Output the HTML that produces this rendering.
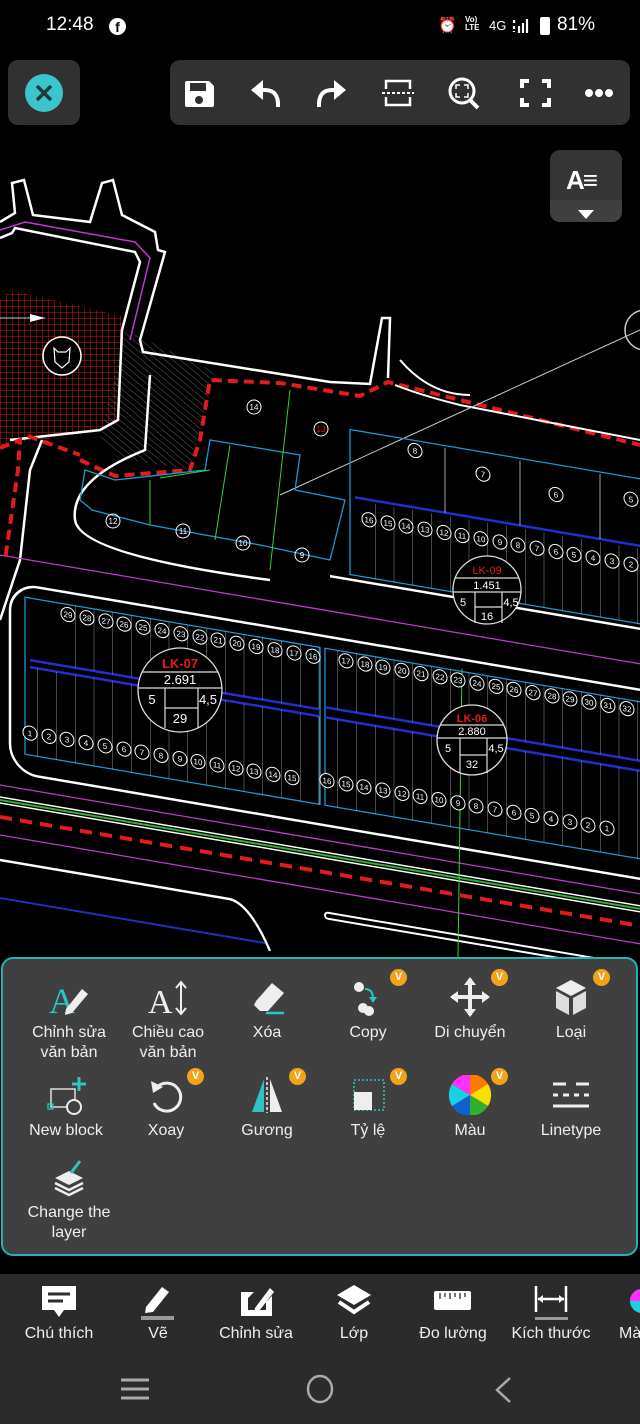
<!DOCTYPE html>
<html><head><meta charset="utf-8"><style>
*{margin:0;padding:0;box-sizing:border-box}
body{width:640px;height:1424px;background:#000;position:relative;overflow:hidden;font-family:"Liberation Sans","Noto Sans CJK SC",sans-serif;color:#fff}
.abs{position:absolute}
.sb{top:14px;font-size:19px}
.box{background:#313131;border-radius:10px}
.panel{left:1px;top:957px;width:637px;height:299px;background:#404040;border:2px solid #1fb3bb;border-radius:12px}
.it{position:absolute;width:100px;text-align:center;font-size:16px;line-height:20px;color:#eee}
.it svg{display:block;margin:0 auto 6px}
.bd{position:absolute;width:17px;height:17px;border-radius:50%;background:#f2a21b;color:#fff;font-size:11px;font-weight:bold;text-align:center;line-height:17px}
.bar{left:0;top:1274px;width:640px;height:150px;background:#2b2b2b}
.bt{position:absolute;top:1325px;width:100px;text-align:center;font-size:16px;color:#eee}
</style></head><body>

<svg class="abs" style="left:0;top:0" width="640" height="960" viewBox="0 0 640 960">
<defs>
<pattern id="grid" width="6" height="6" patternUnits="userSpaceOnUse"><path d="M0 0H6M0 0V6" stroke="#d01818" stroke-width="1"/></pattern>
<pattern id="hatch" width="5" height="5" patternUnits="userSpaceOnUse" patternTransform="rotate(-50)"><path d="M0 0V5" stroke="#777" stroke-width="0.8"/></pattern>
<pattern id="lots" width="18.75" height="300" patternUnits="userSpaceOnUse"><path d="M0 0V300" stroke="#ccc" stroke-width="0.7"/></pattern>
</defs>
<polygon points="10,290 122,316 116,420 95,432 0,445 0,300" fill="url(#grid)"/>
<polygon points="125,330 215,372 190,470 118,458 100,440" fill="url(#hatch)"/>
<path d="M0 222 L15 213 L12 183 L24 180 L33 215 L90 222 L102 183 L113 180 L122 215 L155 232 L158 250 L165 252 L140 340 L143 352 L330 382 L370 384 L382 318 L390 318 L388 378" fill="none" stroke="#fff" stroke-width="2.5"/>
<path d="M0 238 L12 233 L15 228 L135 252 L140 262 L122 330 L118 420 L100 430 L10 440" fill="none" stroke="#fff" stroke-width="2.5"/>
<path d="M0 230 L25 222 L135 242 L150 258 L130 340" fill="none" stroke="#c03ad0" stroke-width="1.5"/>
<circle cx="62" cy="356" r="19" fill="#000" stroke="#fff" stroke-width="1.5"/>
<path d="M54 348 L58 352 L66 352 L70 348 L69 362 L62 368 L55 362Z" fill="none" stroke="#fff" stroke-width="1.2"/>
<path d="M0 318 H45" stroke="#ccc"/><path d="M30 314 L45 318 L30 322Z" fill="#fff"/>
<path d="M42 440 L30 470 L20 560 L0 620" fill="none" stroke="#fff" stroke-width="2.5"/>
<path d="M0 448 L20 440 L18 470 L5 560" fill="none" stroke="#e51b1b" stroke-width="4" stroke-dasharray="10 6"/>
<path d="M80 460 L115 476 L190 470 L200 440 L210 380 L280 383 L360 396 L388 382 L640 445" fill="none" stroke="#e51b1b" stroke-width="4" stroke-dasharray="10 6"/>
<path d="M28 436 L80 455" stroke="#e51b1b" stroke-width="4" stroke-dasharray="10 6"/>
<path d="M395 385 Q420 395 460 405 L640 440" fill="none" stroke="#fff" stroke-width="2"/>
<path d="M400 360 Q430 395 470 395" fill="none" stroke="#fff" stroke-width="2"/>
<path d="M150 375 L145 450 Q70 480 75 520 Q80 555 270 580" fill="none" stroke="#fff" stroke-width="2.5"/>
<path d="M280 495 L640 330" stroke="#ccc" stroke-width="1"/>
<circle cx="645" cy="330" r="20" fill="none" stroke="#ccc" stroke-width="1.5"/>
<path d="M85 470 L80 500 L92 510 L150 525 L260 545 L330 560 L345 500 L295 490 L300 455 L210 440 L205 470 L115 480Z" fill="none" stroke="#1a9ad6" stroke-width="1.3"/>
<path d="M150 480 L150 525 M230 445 L215 540 M290 390 L270 570 M160 478 L210 470" stroke="#2fd62f" stroke-width="1"/>
<g fill="none" stroke="#fff" stroke-width="1"><circle cx="254" cy="407" r="7"/><circle cx="321" cy="429" r="7"/><circle cx="113" cy="521" r="7"/><circle cx="183" cy="531" r="7"/><circle cx="243" cy="543" r="7"/><circle cx="302" cy="555" r="7"/></g>
<g fill="#fff" font-size="8" text-anchor="middle"><text x="254" y="410">14</text><text x="321" y="432" fill="#e51b1b">13</text><text x="113" y="524">12</text><text x="183" y="534">11</text><text x="243" y="546">10</text><text x="302" y="558">9</text></g>

<g transform="matrix(1,0.17,0,1,0,0)">
 <rect x="10" y="581" width="700" height="189" rx="28" fill="none" stroke="#fff" stroke-width="2.5"/>
 <path d="M330 520 H700" stroke="#fff" stroke-width="2.5"/>
 <path d="M0 555 H700 M0 785 H700 M0 835 H700" stroke="#c03ad0" stroke-width="1.3"/>
 <path d="M0 797 H700 M0 803 H700" stroke="#fff" stroke-width="1.5"/>
 <path d="M0 800 H700" stroke="#2fb02f" stroke-width="2"/>
 <path d="M0 817 H700" stroke="#e51b1b" stroke-width="4" stroke-dasharray="12 8"/>
 <path d="M0 860 H230 Q250 862 270 905" fill="none" stroke="#fff" stroke-width="2.5"/>
 <rect x="325" y="857" width="400" height="6" rx="3" fill="none" stroke="#fff" stroke-width="2"/>
 <path d="M0 898 H265" stroke="#2030c0" stroke-width="2"/>
 <path d="M462 590 L458 880" stroke="#2fd62f" stroke-width="1"/>
 <rect x="350" y="370" width="300" height="145" fill="none" stroke="#1a9ad6" stroke-width="1.3"/>
 <path d="M355 437 H650" stroke="#2030d0" stroke-width="2.5"/>
 <path d="M445 372 V437 M520 372 V437 M600 372 V437" stroke="#ccc" stroke-width="0.8"/>
 <rect x="360" y="440" width="290" height="75" fill="url(#lots)"/>
 <rect x="25" y="593" width="295" height="157" fill="none" stroke="#1a9ad6" stroke-width="1.3"/>
 <path d="M30 655 H320 M30 662 H320" stroke="#2030d0" stroke-width="2.5"/>
 <rect x="58" y="593" width="262" height="62" fill="url(#lots)"/>
 <rect x="21" y="662" width="299" height="88" fill="url(#lots)"/>
 <rect x="325" y="593" width="330" height="157" fill="none" stroke="#1a9ad6" stroke-width="1.3"/>
 <path d="M325 652 H660 M325 662 H660" stroke="#2030d0" stroke-width="2.5"/>
 <rect x="337" y="593" width="320" height="59" fill="url(#lots)"/>
 <rect x="318" y="662" width="340" height="88" fill="url(#lots)"/>
 <g fill="#000" stroke="#fff" stroke-width="1">
  <circle cx="68" cy="603" r="7"/><circle cx="87" cy="603" r="7"/><circle cx="106" cy="603" r="7"/><circle cx="124" cy="603" r="7"/><circle cx="143" cy="603" r="7"/><circle cx="162" cy="603" r="7"/><circle cx="181" cy="603" r="7"/><circle cx="200" cy="603" r="7"/><circle cx="218" cy="603" r="7"/><circle cx="237" cy="603" r="7"/><circle cx="256" cy="603" r="7"/><circle cx="275" cy="603" r="7"/><circle cx="294" cy="603" r="7"/><circle cx="313" cy="603" r="7"/>
  <circle cx="30" cy="728" r="7"/><circle cx="49" cy="728" r="7"/><circle cx="67" cy="728" r="7"/><circle cx="86" cy="728" r="7"/><circle cx="105" cy="728" r="7"/><circle cx="124" cy="728" r="7"/><circle cx="142" cy="728" r="7"/><circle cx="161" cy="728" r="7"/><circle cx="180" cy="728" r="7"/><circle cx="198" cy="728" r="7"/><circle cx="217" cy="728" r="7"/><circle cx="236" cy="728" r="7"/><circle cx="254" cy="728" r="7"/><circle cx="273" cy="728" r="7"/><circle cx="292" cy="728" r="7"/>
  <circle cx="346" cy="602" r="7"/><circle cx="365" cy="602" r="7"/><circle cx="383" cy="602" r="7"/><circle cx="402" cy="602" r="7"/><circle cx="421" cy="602" r="7"/><circle cx="440" cy="602" r="7"/><circle cx="458" cy="602" r="7"/><circle cx="477" cy="602" r="7"/><circle cx="496" cy="602" r="7"/><circle cx="514" cy="602" r="7"/><circle cx="533" cy="602" r="7"/><circle cx="552" cy="602" r="7"/><circle cx="570" cy="602" r="7"/><circle cx="589" cy="602" r="7"/><circle cx="608" cy="602" r="7"/><circle cx="627" cy="602" r="7"/>
  <circle cx="327" cy="725" r="7"/><circle cx="346" cy="725" r="7"/><circle cx="364" cy="725" r="7"/><circle cx="383" cy="725" r="7"/><circle cx="402" cy="725" r="7"/><circle cx="420" cy="725" r="7"/><circle cx="439" cy="725" r="7"/><circle cx="458" cy="725" r="7"/><circle cx="476" cy="725" r="7"/><circle cx="495" cy="725" r="7"/><circle cx="514" cy="725" r="7"/><circle cx="532" cy="725" r="7"/><circle cx="551" cy="725" r="7"/><circle cx="570" cy="725" r="7"/><circle cx="588" cy="725" r="7"/><circle cx="607" cy="725" r="7"/>
  <circle cx="369" cy="457" r="7"/><circle cx="388" cy="457" r="7"/><circle cx="406" cy="457" r="7"/><circle cx="425" cy="457" r="7"/><circle cx="444" cy="457" r="7"/><circle cx="462" cy="457" r="7"/><circle cx="481" cy="457" r="7"/><circle cx="500" cy="457" r="7"/><circle cx="518" cy="457" r="7"/><circle cx="537" cy="457" r="7"/><circle cx="556" cy="457" r="7"/><circle cx="574" cy="457" r="7"/><circle cx="593" cy="457" r="7"/><circle cx="612" cy="457" r="7"/><circle cx="631" cy="457" r="7"/>
  <circle cx="415" cy="380" r="7"/><circle cx="483" cy="392" r="7"/><circle cx="556" cy="400" r="7"/><circle cx="631" cy="392" r="7"/>
 </g>
 <g fill="#fff" font-size="8" text-anchor="middle">
  <text x="68" y="606">29</text><text x="87" y="606">28</text><text x="106" y="606">27</text><text x="124" y="606">26</text><text x="143" y="606">25</text><text x="162" y="606">24</text><text x="181" y="606">23</text><text x="200" y="606">22</text><text x="218" y="606">21</text><text x="237" y="606">20</text><text x="256" y="606">19</text><text x="275" y="606">18</text><text x="294" y="606">17</text><text x="313" y="606">16</text>
  <text x="30" y="731">1</text><text x="49" y="731">2</text><text x="67" y="731">3</text><text x="86" y="731">4</text><text x="105" y="731">5</text><text x="124" y="731">6</text><text x="142" y="731">7</text><text x="161" y="731">8</text><text x="180" y="731">9</text><text x="198" y="731">10</text><text x="217" y="731">11</text><text x="236" y="731">12</text><text x="254" y="731">13</text><text x="273" y="731">14</text><text x="292" y="731">15</text>
  <text x="346" y="605">17</text><text x="365" y="605">18</text><text x="383" y="605">19</text><text x="402" y="605">20</text><text x="421" y="605">21</text><text x="440" y="605">22</text><text x="458" y="605">23</text><text x="477" y="605">24</text><text x="496" y="605">25</text><text x="514" y="605">26</text><text x="533" y="605">27</text><text x="552" y="605">28</text><text x="570" y="605">29</text><text x="589" y="605">30</text><text x="608" y="605">31</text><text x="627" y="605">32</text>
  <text x="327" y="728">16</text><text x="346" y="728">15</text><text x="364" y="728">14</text><text x="383" y="728">13</text><text x="402" y="728">12</text><text x="420" y="728">11</text><text x="439" y="728">10</text><text x="458" y="728">9</text><text x="476" y="728">8</text><text x="495" y="728">7</text><text x="514" y="728">6</text><text x="532" y="728">5</text><text x="551" y="728">4</text><text x="570" y="728">3</text><text x="588" y="728">2</text><text x="607" y="728">1</text>
  <text x="369" y="460">16</text><text x="388" y="460">15</text><text x="406" y="460">14</text><text x="425" y="460">13</text><text x="444" y="460">12</text><text x="462" y="460">11</text><text x="481" y="460">10</text><text x="500" y="460">9</text><text x="518" y="460">8</text><text x="537" y="460">7</text><text x="556" y="460">6</text><text x="574" y="460">5</text><text x="593" y="460">4</text><text x="612" y="460">3</text><text x="631" y="460">2</text>
  <text x="415" y="383">8</text><text x="483" y="395">7</text><text x="556" y="403">6</text><text x="631" y="395">5</text>
 </g>
</g>
<g font-family="Liberation Sans, sans-serif" text-anchor="middle">
 <g transform="translate(180,690)"><circle r="42" fill="#000" stroke="#ddd" stroke-width="1.3"/>
  <path d="M-38 -18 H38 M-42 -2 H42 M-15 -2 V38 M18 -2 V38 M-15 18 H18" stroke="#ddd" stroke-width="1.2"/>
  <text y="-22" fill="#e51b1b" font-size="13" font-weight="bold">LK-07</text><text y="-6" fill="#fff" font-size="13">2.691</text><text x="-28" y="14" fill="#fff" font-size="13">5</text><text x="28" y="14" fill="#fff" font-size="13">4,5</text><text y="33" fill="#fff" font-size="13">29</text></g>
 <g transform="translate(472,740)"><circle r="35" fill="#000" stroke="#ddd" stroke-width="1.3"/>
  <path d="M-32 -15 H32 M-35 -2 H35 M-12 -2 V33 M15 -2 V33 M-12 15 H15" stroke="#ddd" stroke-width="1.2"/>
  <text y="-18" fill="#e51b1b" font-size="11" font-weight="bold">LK-06</text><text y="-5" fill="#fff" font-size="11">2.880</text><text x="-24" y="12" fill="#fff" font-size="11">5</text><text x="24" y="12" fill="#fff" font-size="11">4,5</text><text y="28" fill="#fff" font-size="11">32</text></g>
 <g transform="translate(487,590)"><circle r="34" fill="#000" stroke="#ddd" stroke-width="1.3"/>
  <path d="M-32 -12 H32 M-34 2 H34 M-12 2 V33 M15 2 V33 M-12 17 H15" stroke="#ddd" stroke-width="1.2"/>
  <text y="-16" fill="#e51b1b" font-size="11">LK-09</text><text y="-1" fill="#fff" font-size="11">1.451</text><text x="-24" y="16" fill="#fff" font-size="11">5</text><text x="24" y="16" fill="#fff" font-size="11">4,5</text><text y="30" fill="#fff" font-size="11">16</text></g>
</g>
</svg>

<div class="abs sb" style="left:46px">12:48</div>
<div class="abs" style="left:109px;top:18px;width:17px;height:17px;border-radius:50%;background:#fff;color:#000;font-size:14px;font-weight:bold;text-align:center;line-height:19px">f</div>
<div class="abs" style="left:438px;top:16px;font-size:15px">⏰</div>
<div class="abs" style="left:465px;top:16px;font-size:8px;line-height:8px;font-weight:bold">Vo)<br>LTE</div>
<div class="abs" style="left:489px;top:18px;font-size:13px">4G</div>
<svg class="abs" style="left:510px;top:17px" width="22" height="18"><path d="M4 3v3M4 9v3M4 14v1M9 9v7M13 6v10M17 2v14" stroke="#fff" stroke-width="2.2"/></svg>
<div class="abs" style="left:540px;top:17px;width:10px;height:18px;background:#fff;border-radius:2px"></div>
<div class="abs sb" style="left:557px">81%</div>

<div class="abs box" style="left:8px;top:60px;width:72px;height:65px"></div>
<svg class="abs" style="left:25px;top:74px" width="38" height="38"><circle cx="19" cy="19" r="19" fill="#3cc4cc"/><path d="M12 12L26 26M26 12L12 26" stroke="#1a3a3e" stroke-width="3.5"/></svg>
<div class="abs box" style="left:170px;top:60px;width:460px;height:65px"></div>
<svg class="abs" style="left:170px;top:60px" width="460" height="65" fill="none" stroke="#fff">
 <path d="M17 21h22l5 5v19a2 2 0 0 1-2 2H17a2 2 0 0 1-2-2V23a2 2 0 0 1 2-2z" fill="#fff" stroke="none"/>
 <rect x="20" y="23" width="16" height="8" fill="#313131" stroke="none"/><circle cx="29" cy="40" r="4" fill="#313131" stroke="none"/>
 <path d="M108 47 Q109 30 95 30 H91" stroke-width="4"/><path d="M93 20 L81 30 L93 40Z" fill="#fff" stroke="none"/>
 <path d="M149 47 Q148 30 162 30 H166" stroke-width="4"/><path d="M164 20 L176 30 L164 40Z" fill="#fff" stroke="none"/>
 <path d="M216 29 V21 H240 V29 M216 37 V45 H240 V37" stroke-width="2.5"/><path d="M212 33 H244" stroke-width="2" stroke-dasharray="3 2"/>
 <circle cx="292" cy="31" r="12" stroke-width="3"/><path d="M300 40 L308 48" stroke-width="4"/><path d="M286 29v-4h4M298 29v-4h-4M286 33v4h4M298 33v4h-4" stroke-width="1.5"/>
 <path d="M352 28 V21 H359 M372 21 H379 V28 M352 38 V45 H359 M372 45 H379 V38" stroke-width="4"/>
 <circle cx="419" cy="33" r="3.5" fill="#fff"/><circle cx="429" cy="33" r="3.5" fill="#fff"/><circle cx="439" cy="33" r="3.5" fill="#fff"/>
</svg>
<div class="abs box" style="left:550px;top:150px;width:72px;height:72px;background:#353535"></div>
<div class="abs" style="left:550px;top:200px;width:72px;height:22px;background:#404040;border-radius:0 0 10px 10px"></div>
<div class="abs" style="left:566px;top:165px;font-size:26px;font-weight:bold;letter-spacing:-2px">A≡</div>
<svg class="abs" style="left:576px;top:208px" width="20" height="12"><path d="M2 2H18L10 11Z" fill="#fff"/></svg>

<div class="abs panel">
 <div class="it" style="left:16px;top:18px"><svg width="46" height="40"><text x="3" y="36" font-family="Liberation Serif,serif" font-size="36" fill="#2ec4c4">A</text><path d="M20 32 L36 12 L42 17 L26 36 L19 38Z" fill="#eee"/></svg>Chỉnh sửa<br>văn bản</div>
 <div class="it" style="left:115px;top:18px"><svg width="46" height="40"><text x="3" y="36" font-family="Liberation Serif,serif" font-size="34" fill="#eee">A</text><path d="M36 6V36M31 11L36 5L41 11M31 31L36 37L41 31" stroke="#eee" stroke-width="2" fill="none"/></svg>Chiều cao<br>văn bản</div>
 <div class="it" style="left:214px;top:18px"><svg width="46" height="40"><path d="M12 24L28 6L40 16L24 34H16L10 28Z" fill="#eee"/><path d="M22 36H40" stroke="#2ec4c4" stroke-width="2.5"/></svg>Xóa</div>
 <div class="it" style="left:315px;top:18px"><svg width="46" height="40"><circle cx="14" cy="10" r="5" fill="#eee"/><circle cx="18" cy="31" r="5" fill="#eee"/><circle cx="24" cy="34" r="5" fill="#eee"/><path d="M20 12 Q28 12 28 22" stroke="#2ec4c4" stroke-width="2" fill="none"/><path d="M24 20L28 26L32 20Z" fill="#2ec4c4"/></svg>Copy</div>
 <div class="it" style="left:417px;top:18px"><svg width="46" height="40"><path d="M23 2V38M5 20H41" stroke="#eee" stroke-width="4"/><path d="M23 0L17 8H29ZM23 40L17 32H29ZM3 20L11 14V26ZM43 20L35 14V26Z" fill="#eee"/></svg>Di chuyển</div>
 <div class="it" style="left:518px;top:18px"><svg width="46" height="40"><path d="M23 3L38 11L23 19L8 11Z" fill="#eee"/><path d="M8 14L21 21V38L8 31Z M38 14L25 21V38L38 31Z" fill="#ddd"/></svg>Loại</div>
 <div class="it" style="left:13px;top:116px"><svg width="46" height="40"><rect x="8" y="14" width="24" height="18" fill="none" stroke="#ddd" stroke-width="1.5"/><circle cx="31" cy="32" r="7" fill="#404040" stroke="#eee" stroke-width="2"/><path d="M36 2V16M29 9H43" stroke="#2ec4c4" stroke-width="3"/><rect x="5" y="29" width="5" height="5" fill="none" stroke="#2ec4c4" stroke-width="1.3"/></svg>New block</div>
 <div class="it" style="left:113px;top:116px"><svg width="46" height="40"><path d="M14 12 A14 14 0 1 1 11 28" stroke="#eee" stroke-width="3" fill="none"/><path d="M8 6L10 18L20 12Z" fill="#eee"/></svg>Xoay</div>
 <div class="it" style="left:214px;top:116px"><svg width="46" height="40"><path d="M20 4L8 37H20Z" fill="#2ec4c4"/><path d="M26 4L38 37H26Z" fill="#eee"/><path d="M23 2V38" stroke="#eee" stroke-width="1.5" stroke-dasharray="3 2"/></svg>Gương</div>
 <div class="it" style="left:315px;top:116px"><svg width="46" height="40"><rect x="9" y="5" width="30" height="30" fill="none" stroke="#2ec4c4" stroke-width="1.5" stroke-dasharray="2 2"/><rect x="9" y="17" width="18" height="18" fill="#eee"/></svg>Tỷ lệ</div>
 <div class="it" style="left:417px;top:116px"><svg width="46" height="40"><circle cx="23" cy="20" r="21" fill="#e02020"/><path d="M23 20L23 -1A21 21 0 0 1 41 9Z" fill="#ff7a00"/><path d="M23 20L41 9A21 21 0 0 1 41 31Z" fill="#f5e000"/><path d="M23 20L41 31A21 21 0 0 1 23 41Z" fill="#30b030"/><path d="M23 20L23 41A21 21 0 0 1 5 31Z" fill="#1060d0"/><path d="M23 20L5 31A21 21 0 0 1 5 9Z" fill="#19d0e0"/><path d="M23 20L5 9A21 21 0 0 1 23 -1Z" fill="#ff30ff"/></svg>Màu</div>
 <div class="it" style="left:518px;top:116px"><svg width="46" height="40"><path d="M5 9H18M28 9H41M5 20H10M15 20H21M26 20H31M36 20H41M5 31H41" stroke="#eee" stroke-width="3"/></svg>Linetype</div>
 <div class="it" style="left:16px;top:198px"><svg width="46" height="40"><path d="M23 14L37 21L23 28L9 21Z" fill="#eee"/><path d="M9 26L23 33L37 26M9 31L23 38L37 31" stroke="#eee" stroke-width="2.5" fill="none"/><path d="M25 16L34 4" stroke="#2ec4c4" stroke-width="3"/></svg>Change the<br>layer</div>
 <div class="bd" style="left:387px;top:10px">V</div><div class="bd" style="left:488px;top:10px">V</div><div class="bd" style="left:590px;top:10px">V</div>
 <div class="bd" style="left:184px;top:109px">V</div><div class="bd" style="left:286px;top:109px">V</div><div class="bd" style="left:387px;top:109px">V</div><div class="bd" style="left:488px;top:109px">V</div>
</div>

<div class="abs bar"></div>
<svg class="abs" style="left:0;top:1280px" width="640" height="40">
 <path d="M42 6H76V30H64L59 37L54 30H42Z" fill="#fff"/><path d="M48 14H70M48 21H63" stroke="#2b2b2b" stroke-width="3"/>
 <path d="M146 27L162 7L169 12L153 32L145 33Z" fill="#fff"/><path d="M141 38H174" stroke="#999" stroke-width="4"/>
 <path d="M241 12H254L248 18V30H266V22L272 16V36H241Z" fill="#fff"/><path d="M255 28L270 8L274 12L259 31L254 33Z" fill="#fff"/>
 <path d="M354 5L371 15L354 25L337 15Z" fill="#fff"/><path d="M339 22L354 32L369 22" stroke="#fff" stroke-width="4" fill="none"/>
 <rect x="434" y="11" width="37" height="19" rx="2" fill="#fff"/><path d="M440 13V19M445 13V17M450 13V19M455 13V17M460 13V19M465 13V17" stroke="#2b2b2b" stroke-width="1.3"/>
 <path d="M536 6V32M566 6V32M538 19H564" stroke="#fff" stroke-width="2.5"/><path d="M538 19L543 15V23ZM564 19L559 15V23Z" fill="#fff"/><path d="M535 39H568" stroke="#999" stroke-width="4"/>
 <circle cx="642" cy="21" r="12" fill="#19d0e0"/><path d="M630 21A12 12 0 0 1 642 9V21Z" fill="#ff30ff"/>
</svg>
<div class="bt" style="left:9px">Chú thích</div>
<div class="bt" style="left:108px">Vẽ</div>
<div class="bt" style="left:206px">Chỉnh sửa</div>
<div class="bt" style="left:304px">Lớp</div>
<div class="bt" style="left:403px">Đo lường</div>
<div class="bt" style="left:501px">Kích thước</div>
<div class="bt" style="left:619px;text-align:left">Màu</div>
<svg class="abs" style="left:0;top:1370px" width="640" height="40">
 <path d="M121 10H149M121 19H149M121 28H149" stroke="#aaa" stroke-width="3"/>
 <ellipse cx="320" cy="19" rx="12" ry="13" fill="none" stroke="#aaa" stroke-width="2.5"/>
 <path d="M510 8L497 20L510 32" stroke="#aaa" stroke-width="2.5" fill="none"/>
</svg>
</body></html>
